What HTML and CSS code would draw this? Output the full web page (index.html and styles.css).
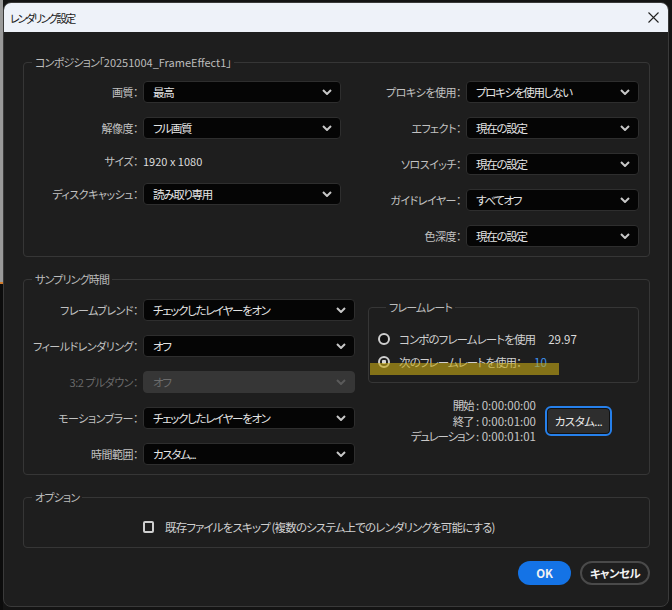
FILE: index.html
```html
<!DOCTYPE html>
<html lang="ja">
<head>
  <meta charset="UTF-8" />
  <title>レンダリング設定</title>
  <link rel="stylesheet" href="styles.css">
</head>
<body>

  <div class="dialog">
    <!-- BARRA DE TITULO -->
    <div class="titlebar">
      <span class="title">レンダリング設定</span>
      <svg class="close" width="11" height="11" viewBox="0 0 11 11"><path d="M0.5 0.5l10 10M10.5 0.5l-10 10"/></svg>
    </div>

    <div class="content">

      <!-- COMPOSICION -->
      <fieldset class="group comp">
        <legend>コンポジション「<span class="latin">20251004_FrameEffect1</span>」</legend>
        <div class="cols">
          <div class="form comp-left">
            <label>画質：</label>
            <div class="select"><span>最高</span><svg viewBox="0 0 10 6"><path d="M1 1l4 4 4-4"/></svg></div>
            <label>解像度：</label>
            <div class="select"><span>フル画質</span><svg viewBox="0 0 10 6"><path d="M1 1l4 4 4-4"/></svg></div>
            <label class="short">サイズ：</label>
            <div class="value short">1920 x 1080</div>
            <label>ディスクキャッシュ：</label>
            <div class="select"><span>読み取り専用</span><svg viewBox="0 0 10 6"><path d="M1 1l4 4 4-4"/></svg></div>
          </div>
          <div class="form comp-right">
            <label>プロキシを使用：</label>
            <div class="select"><span>プロキシを使用しない</span><svg viewBox="0 0 10 6"><path d="M1 1l4 4 4-4"/></svg></div>
            <label>エフェクト：</label>
            <div class="select"><span>現在の設定</span><svg viewBox="0 0 10 6"><path d="M1 1l4 4 4-4"/></svg></div>
            <label>ソロスイッチ：</label>
            <div class="select"><span>現在の設定</span><svg viewBox="0 0 10 6"><path d="M1 1l4 4 4-4"/></svg></div>
            <label>ガイドレイヤー：</label>
            <div class="select"><span>すべてオフ</span><svg viewBox="0 0 10 6"><path d="M1 1l4 4 4-4"/></svg></div>
            <label>色深度：</label>
            <div class="select"><span>現在の設定</span><svg viewBox="0 0 10 6"><path d="M1 1l4 4 4-4"/></svg></div>
          </div>
        </div>
      </fieldset>

      <!-- TIEMPO DE MUESTREO -->
      <fieldset class="group sampling">
        <legend>サンプリング時間</legend>
        <div class="cols">
          <div class="form samp-left">
            <label>フレームブレンド：</label>
            <div class="select"><span>チェックしたレイヤーをオン</span><svg viewBox="0 0 10 6"><path d="M1 1l4 4 4-4"/></svg></div>
            <label>フィールドレンダリング：</label>
            <div class="select"><span>オフ</span><svg viewBox="0 0 10 6"><path d="M1 1l4 4 4-4"/></svg></div>
            <label class="disabled">3:2 プルダウン：</label>
            <div class="select disabled"><span>オフ</span><svg viewBox="0 0 10 6"><path d="M1 1l4 4 4-4"/></svg></div>
            <label>モーションブラー：</label>
            <div class="select"><span>チェックしたレイヤーをオン</span><svg viewBox="0 0 10 6"><path d="M1 1l4 4 4-4"/></svg></div>
            <label>時間範囲：</label>
            <div class="select"><span>カスタム...</span><svg viewBox="0 0 10 6"><path d="M1 1l4 4 4-4"/></svg></div>
          </div>

          <div class="samp-right">
            <fieldset class="group framerate">
              <legend>フレームレート</legend>
              <div class="radio-row">
                <span class="radio"></span>
                <span>コンポのフレームレートを使用</span>
                <span class="rate">29.97</span>
              </div>
              <div class="radio-row">
                <span class="radio checked"></span>
                <span>次のフレームレートを使用：</span>
                <span class="rate link">10</span>
              </div>
              <!-- marcador amarillo encima -->
              <div class="marker"></div>
            </fieldset>

            <div class="timing">
              <div class="times">
                <div>開始<span class="latin"> : 0:00:00:00</span></div>
                <div>終了<span class="latin"> : 0:00:01:00</span></div>
                <div>デュレーション<span class="latin"> : 0:00:01:01</span></div>
              </div>
              <button class="btn custom">カスタム...</button>
            </div>
          </div>
        </div>
      </fieldset>

      <!-- OPCIONES -->
      <fieldset class="group options">
        <legend>オプション</legend>
        <div class="check-row">
          <span class="checkbox"></span>
          <span>既存ファイルをスキップ (複数のシステム上でのレンダリングを可能にする)</span>
        </div>
      </fieldset>

      <div class="actions">
        <button class="btn ok">OK</button>
        <button class="btn cancel">キャンセル</button>
      </div>
    </div>
  </div>

</body>
</html>
```

FILE: styles.css
```css
* {
  box-sizing: border-box;
}

body {
  margin: 0;
  height: 610px;
  padding: 2px 3px 0;
  overflow: hidden;
  background: linear-gradient(to bottom, #9a9a9a 0 282px, #d07a2a 282px 284px, #0c0c0c 284px) no-repeat 0 0 / 3px 100%, #141414;
  font-family: "Noto Sans CJK JP", "Noto Sans", sans-serif;
  font-size: 11px;
  letter-spacing: -0.5px;
  font-feature-settings: "palt";
  color: #c4c4c4;
}

.latin {
  letter-spacing: 0;
}

.dialog {
  width: 666px;
  height: 605px;
  background: #1e1e1e;
  border: 1px solid #3a3a3a;
  border-radius: 8px;
  overflow: hidden;
}

.titlebar {
  height: 29px;
  background: #eef2f9;
  display: flex;
  align-items: center;
  justify-content: space-between;
  padding: 0 9px 0 6px;
  color: #1b1b1b;
}

.title {
  font-size: 11px;
  letter-spacing: -2px;
}

.close path {
  stroke: #222;
  stroke-width: 1.1;
}

.content {
  padding: 22px 18px 0 19px;
}

/* grupos */
.group {
  margin: 0;
  min-width: 0;
  border: 1px solid #363636;
  border-radius: 4px;
  padding: 11px 10px 9px 0;
}

.group legend {
  margin-left: 8px;
  padding: 0 3px;
  line-height: 16px;
  color: #bcbcbc;
  letter-spacing: -0.8px;
}

.sampling {
  margin-top: 14px;
  padding-top: 12px;
}

.options {
  margin-top: 14px;
  padding: 14px 10px 12px 0;
}

.cols {
  display: flex;
  justify-content: space-between;
}

/* formularios */
.form {
  display: grid;
  column-gap: 5px;
  row-gap: 14px;
  align-items: center;
  align-content: start;
}

.comp-left {
  grid-template-columns: 114px 198px;
}

.comp-right {
  grid-template-columns: 120px 173px;
}

.samp-left {
  grid-template-columns: 114px 212px;
}

.form label {
  justify-self: end;
  white-space: nowrap;
  color: #c2c2c2;
}

.form label.disabled {
  color: #6a6a6a;
}

.value {
  color: #dcdcdc;
  line-height: 15px;
  letter-spacing: 0;
}

.select {
  height: 22px;
  display: flex;
  align-items: center;
  justify-content: space-between;
  padding: 0 8px 0 9px;
  background: #050505;
  border: 1px solid #2e2e2e;
  border-radius: 4px;
  color: #e4e4e4;
  font-size: 11.5px;
  letter-spacing: -1.3px;
  white-space: nowrap;
}

.select svg {
  width: 10px;
  height: 6px;
  fill: none;
}

.select path {
  stroke: #c8c8c8;
  stroke-width: 2;
}

.select.disabled {
  background: #363636;
  border-color: #363636;
  color: #6c6c6c;
}

.select.disabled path {
  stroke: #5a5a5a;
}

/* velocidad de fotogramas */
.samp-right {
  width: 271px;
}

.framerate {
  position: relative;
  padding: 16px 10px 12px 9px;
}

.radio-row {
  display: flex;
  align-items: center;
  height: 16px;
  color: #d0d0d0;
  font-size: 11.5px;
  letter-spacing: -0.9px;
}

.radio-row + .radio-row {
  margin-top: 7px;
}

.radio {
  width: 12px;
  height: 12px;
  border-radius: 50%;
  border: 2px solid #cfcfcf;
  background: #111;
  margin-right: 9px;
  flex: none;
}

.radio.checked {
  background: radial-gradient(circle, #d8d8d8 0 2px, #1e1e1e 2.5px);
}

.rate {
  margin-left: 13px;
  color: #dcdcdc;
  letter-spacing: 0;
}

.rate.link {
  color: #3f95f5;
}

.marker {
  position: absolute;
  left: 1px;
  top: 48px;
  width: 189px;
  height: 12px;
  background: rgba(200, 170, 20, 0.6);
}

.timing {
  display: flex;
  justify-content: flex-end;
  align-items: center;
  gap: 9px;
  margin-top: 15px;
  padding-right: 27px;
}

.times {
  text-align: right;
  line-height: 15.5px;
  color: #c8c8c8;
  font-size: 11.5px;
  letter-spacing: -1.2px;
}

/* botones */
.btn {
  font-family: inherit;
  font-size: 11.5px;
  letter-spacing: -0.6px;
  font-feature-settings: "palt";
  cursor: pointer;
}

.custom {
  width: 67px;
  height: 30px;
  background: #2e2e2e;
  border: 2px solid #2680eb;
  border-radius: 6px;
  color: #eaeaea;
  padding: 0;
  box-shadow: inset 0 0 0 1px #111;
}

.check-row {
  display: flex;
  align-items: center;
  height: 16px;
  padding-left: 119px;
  color: #d0d0d0;
  font-size: 11.5px;
  letter-spacing: -0.85px;
}

.checkbox {
  width: 11px;
  height: 12px;
  border: 2px solid #cfcfcf;
  border-radius: 2px;
  margin-right: 11px;
}

.actions {
  display: flex;
  justify-content: flex-end;
  gap: 9px;
  margin-top: 13px;
}

.ok,
.cancel {
  height: 24px;
  border-radius: 12px;
  font-weight: bold;
  color: #f2f2f2;
  padding: 0;
}

.ok {
  width: 53px;
  background: #1473e6;
  border: none;
  letter-spacing: 0;
}

.cancel {
  width: 70px;
  background: transparent;
  border: 2px solid #4a4a4a;
}
```
